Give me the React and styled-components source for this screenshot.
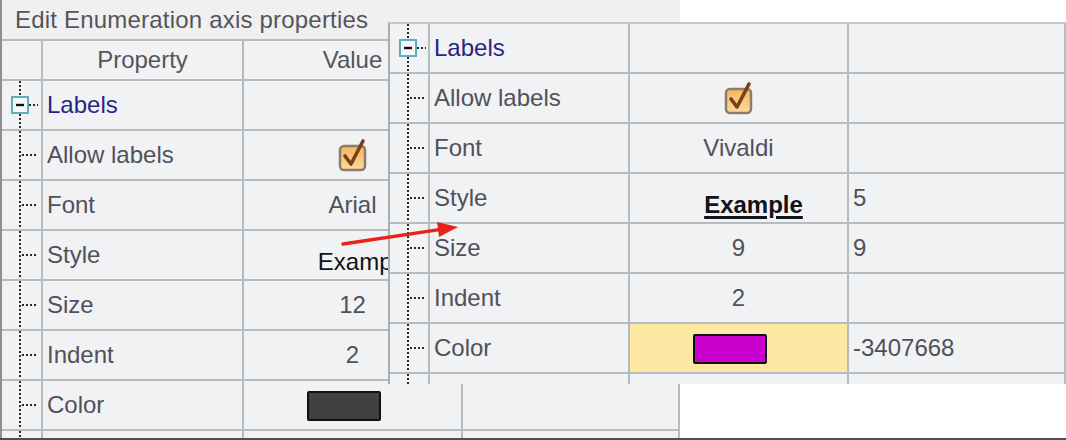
import React from 'react';
import styled, { createGlobalStyle } from 'styled-components';

const GlobalStyle = createGlobalStyle`
  html, body { margin: 0; padding: 0; background: #ffffff; }
  body { font-family: "Liberation Sans", Arial, sans-serif; }
`;

const LINE = '#b6bbbf';
const CELL_BG = '#f1f2f3';

const Stage = styled.div`
  position: relative;
  width: 1066px;
  height: 438px;
  border-bottom: 2px solid #4f4f4f;
  background: #ffffff;
  overflow: hidden;
`;

const Panel = styled.div`
  width: 680px;
  height: 438px;
  box-sizing: border-box;
  border-left: 2px solid #8f8f8f;
  background: #f0f0f0;
  display: flex;
  flex-direction: column;
  overflow: hidden;
`;

const Title = styled.div`
  height: 39px;
  flex: none;
  display: flex;
  align-items: center;
  padding-left: 13px;
  font-size: 24px;
  letter-spacing: 0.2px;
  color: #54545c;
`;

const Grid = styled.div`
  display: flex;
  flex-direction: column;
  border-top: 2px solid ${LINE};
`;

const Row = styled.div`
  display: grid;
  grid-template-columns: ${p => p.$cols};
  height: ${p => p.$h}px;
  flex: none;
`;

const Cell = styled.div`
  box-sizing: border-box;
  border-right: 2px solid ${LINE};
  border-bottom: 2px solid ${LINE};
  background: ${p => p.$bg || CELL_BG};
  display: flex;
  align-items: ${p => (p.$stretch ? 'flex-start' : 'center')};
  justify-content: ${p => (p.$center ? 'center' : 'flex-start')};
  padding-left: ${p => p.$pad || 0}px;
  font-size: 24px;
  color: ${p => p.$color || '#50505c'};
  white-space: nowrap;
  overflow: hidden;
  min-width: 0;
`;

const Overlay = styled.div`
  position: absolute;
  left: 388px;
  top: 22px;
  width: 678px;
  height: 362px;
  box-sizing: border-box;
  border-left: 2px solid #a9aeb2;
  border-top: 2px solid #c3c7ca;
  background: ${CELL_BG};
  display: flex;
  flex-direction: column;
  overflow: hidden;
`;

const ArrowSvg = styled.svg`
  position: absolute;
  left: 335px;
  top: 215px;
  overflow: visible;
`;

const TreeSvg = styled.svg`
  display: block;
  flex: none;
`;

const Example = styled.span`
  color: #121218;
  font-weight: ${p => (p.$bold ? 700 : 400)};
  text-decoration: ${p => (p.$bold ? 'underline' : 'none')};
  text-decoration-thickness: 3px;
  text-underline-offset: 3px;
  margin-left: ${p => p.$shift}px;
  padding-top: 14px;
`;

const Swatch = styled.div`
  width: 74px;
  height: 30px;
  margin-left: -18px;
  margin-top: 2px;
  box-sizing: border-box;
  border: 2px solid #111111;
  border-radius: 2px;
  background: ${p => p.$color};
`;

const TreeGlyph = ({ group }) => (
  <TreeSvg width="38" height="48" viewBox="0 0 38 48">
    {group ? (
      <g>
        <line x1="18" y1="0" x2="18" y2="15" stroke="#2a2a2a" strokeWidth="2" strokeDasharray="2 2" />
        <line x1="18" y1="33" x2="18" y2="48" stroke="#2a2a2a" strokeWidth="2" strokeDasharray="2 2" />
        <line x1="27" y1="24" x2="36" y2="24" stroke="#2a2a2a" strokeWidth="2" strokeDasharray="2 2" />
        <rect x="10" y="16" width="16" height="16" fill="#f5f8f9" stroke="#5fadbd" strokeWidth="2" />
        <line x1="14" y1="24" x2="22" y2="24" stroke="#111" strokeWidth="2.4" />
      </g>
    ) : (
      <g>
        <line x1="18" y1="0" x2="18" y2="48" stroke="#2a2a2a" strokeWidth="2" strokeDasharray="2 2" />
        <line x1="20" y1="24" x2="34" y2="24" stroke="#2a2a2a" strokeWidth="2" strokeDasharray="2 2" />
      </g>
    )}
  </TreeSvg>
);

const CheckIcon = () => (
  <svg width="32" height="34" viewBox="0 0 32 34">
    <defs>
      <linearGradient id="cbfill" x1="0" y1="0" x2="0" y2="1">
        <stop offset="0" stopColor="#f6b65c" />
        <stop offset="1" stopColor="#fcdc9c" />
      </linearGradient>
    </defs>
    <rect x="3" y="8" width="25" height="24" rx="4" fill="url(#cbfill)" stroke="#8c7c6c" strokeWidth="2.5" />
    <path d="M8 18 L14 26 L26 3" fill="none" stroke="#7a3f1c" strokeWidth="3.6" strokeLinecap="round" strokeLinejoin="round" />
  </svg>
);

const BG_COLS = '41px 201px 219px 217px';
const OV_COLS = '40px 200px 219px 217px';

const bgRows = [
  { group: true, name: 'Labels' },
  { name: 'Allow labels', value: { kind: 'check' } },
  { name: 'Font', value: { kind: 'text', text: 'Arial' } },
  { name: 'Style', value: { kind: 'example', bold: false, shift: 24 } },
  { name: 'Size', value: { kind: 'text', text: '12' } },
  { name: 'Indent', value: { kind: 'text', text: '2' } },
  { name: 'Color', value: { kind: 'swatch', color: '#414141' } },
  { name: '' },
];

const ovRows = [
  { group: true, name: 'Labels' },
  { name: 'Allow labels', value: { kind: 'check' } },
  { name: 'Font', value: { kind: 'text', text: 'Vivaldi' } },
  { name: 'Style', value: { kind: 'example', bold: true, shift: 30 }, extra: '5' },
  { name: 'Size', value: { kind: 'text', text: '9' }, extra: '9' },
  { name: 'Indent', value: { kind: 'text', text: '2' } },
  { name: 'Color', value: { kind: 'swatch', color: '#cc00cc' }, extra: '-3407668', highlight: true },
  { name: '' },
];

const ValueContent = ({ value }) => {
  if (!value) return null;
  if (value.kind === 'check') return <CheckIcon />;
  if (value.kind === 'text') return value.text;
  if (value.kind === 'swatch') return <Swatch $color={value.color} />;
  if (value.kind === 'example')
    return (
      <Example $bold={value.bold} $shift={value.shift}>
        Example
      </Example>
    );
  return null;
};

const PropertyRows = ({ rows, cols }) =>
  rows.map((r, i) => (
    <Row key={i} $cols={cols} $h={50}>
      <Cell $stretch>
        <TreeGlyph group={r.group} />
      </Cell>
      <Cell $pad={4} $color={r.group ? '#2b2487' : undefined}>
        {r.name}
      </Cell>
      <Cell $center $bg={r.highlight ? '#fde9a3' : undefined}>
        <ValueContent value={r.value} />
      </Cell>
      <Cell $pad={4}>{r.extra || ''}</Cell>
    </Row>
  ));

const Arrow = () => (
  <ArrowSvg width="130" height="40" viewBox="0 0 130 40">
    <line x1="8" y1="29" x2="106" y2="14.4" stroke="#e8231e" strokeWidth="3.4" strokeLinecap="round" />
    <polygon points="123,12 104,22 102,7" fill="#e8231e" />
  </ArrowSvg>
);

export default function App() {
  return (
    <>
      <GlobalStyle />
      <Stage>
        <Panel>
          <Title>Edit Enumeration axis properties</Title>
          <Grid>
            <Row $cols={BG_COLS} $h={40}>
              <Cell />
              <Cell $center $color="#55555c">Property</Cell>
              <Cell $center $color="#55555c">Value</Cell>
              <Cell />
            </Row>
            <PropertyRows rows={bgRows} cols={BG_COLS} />
          </Grid>
        </Panel>
        <Overlay>
          <PropertyRows rows={ovRows} cols={OV_COLS} />
        </Overlay>
        <Arrow />
      </Stage>
    </>
  );
}
